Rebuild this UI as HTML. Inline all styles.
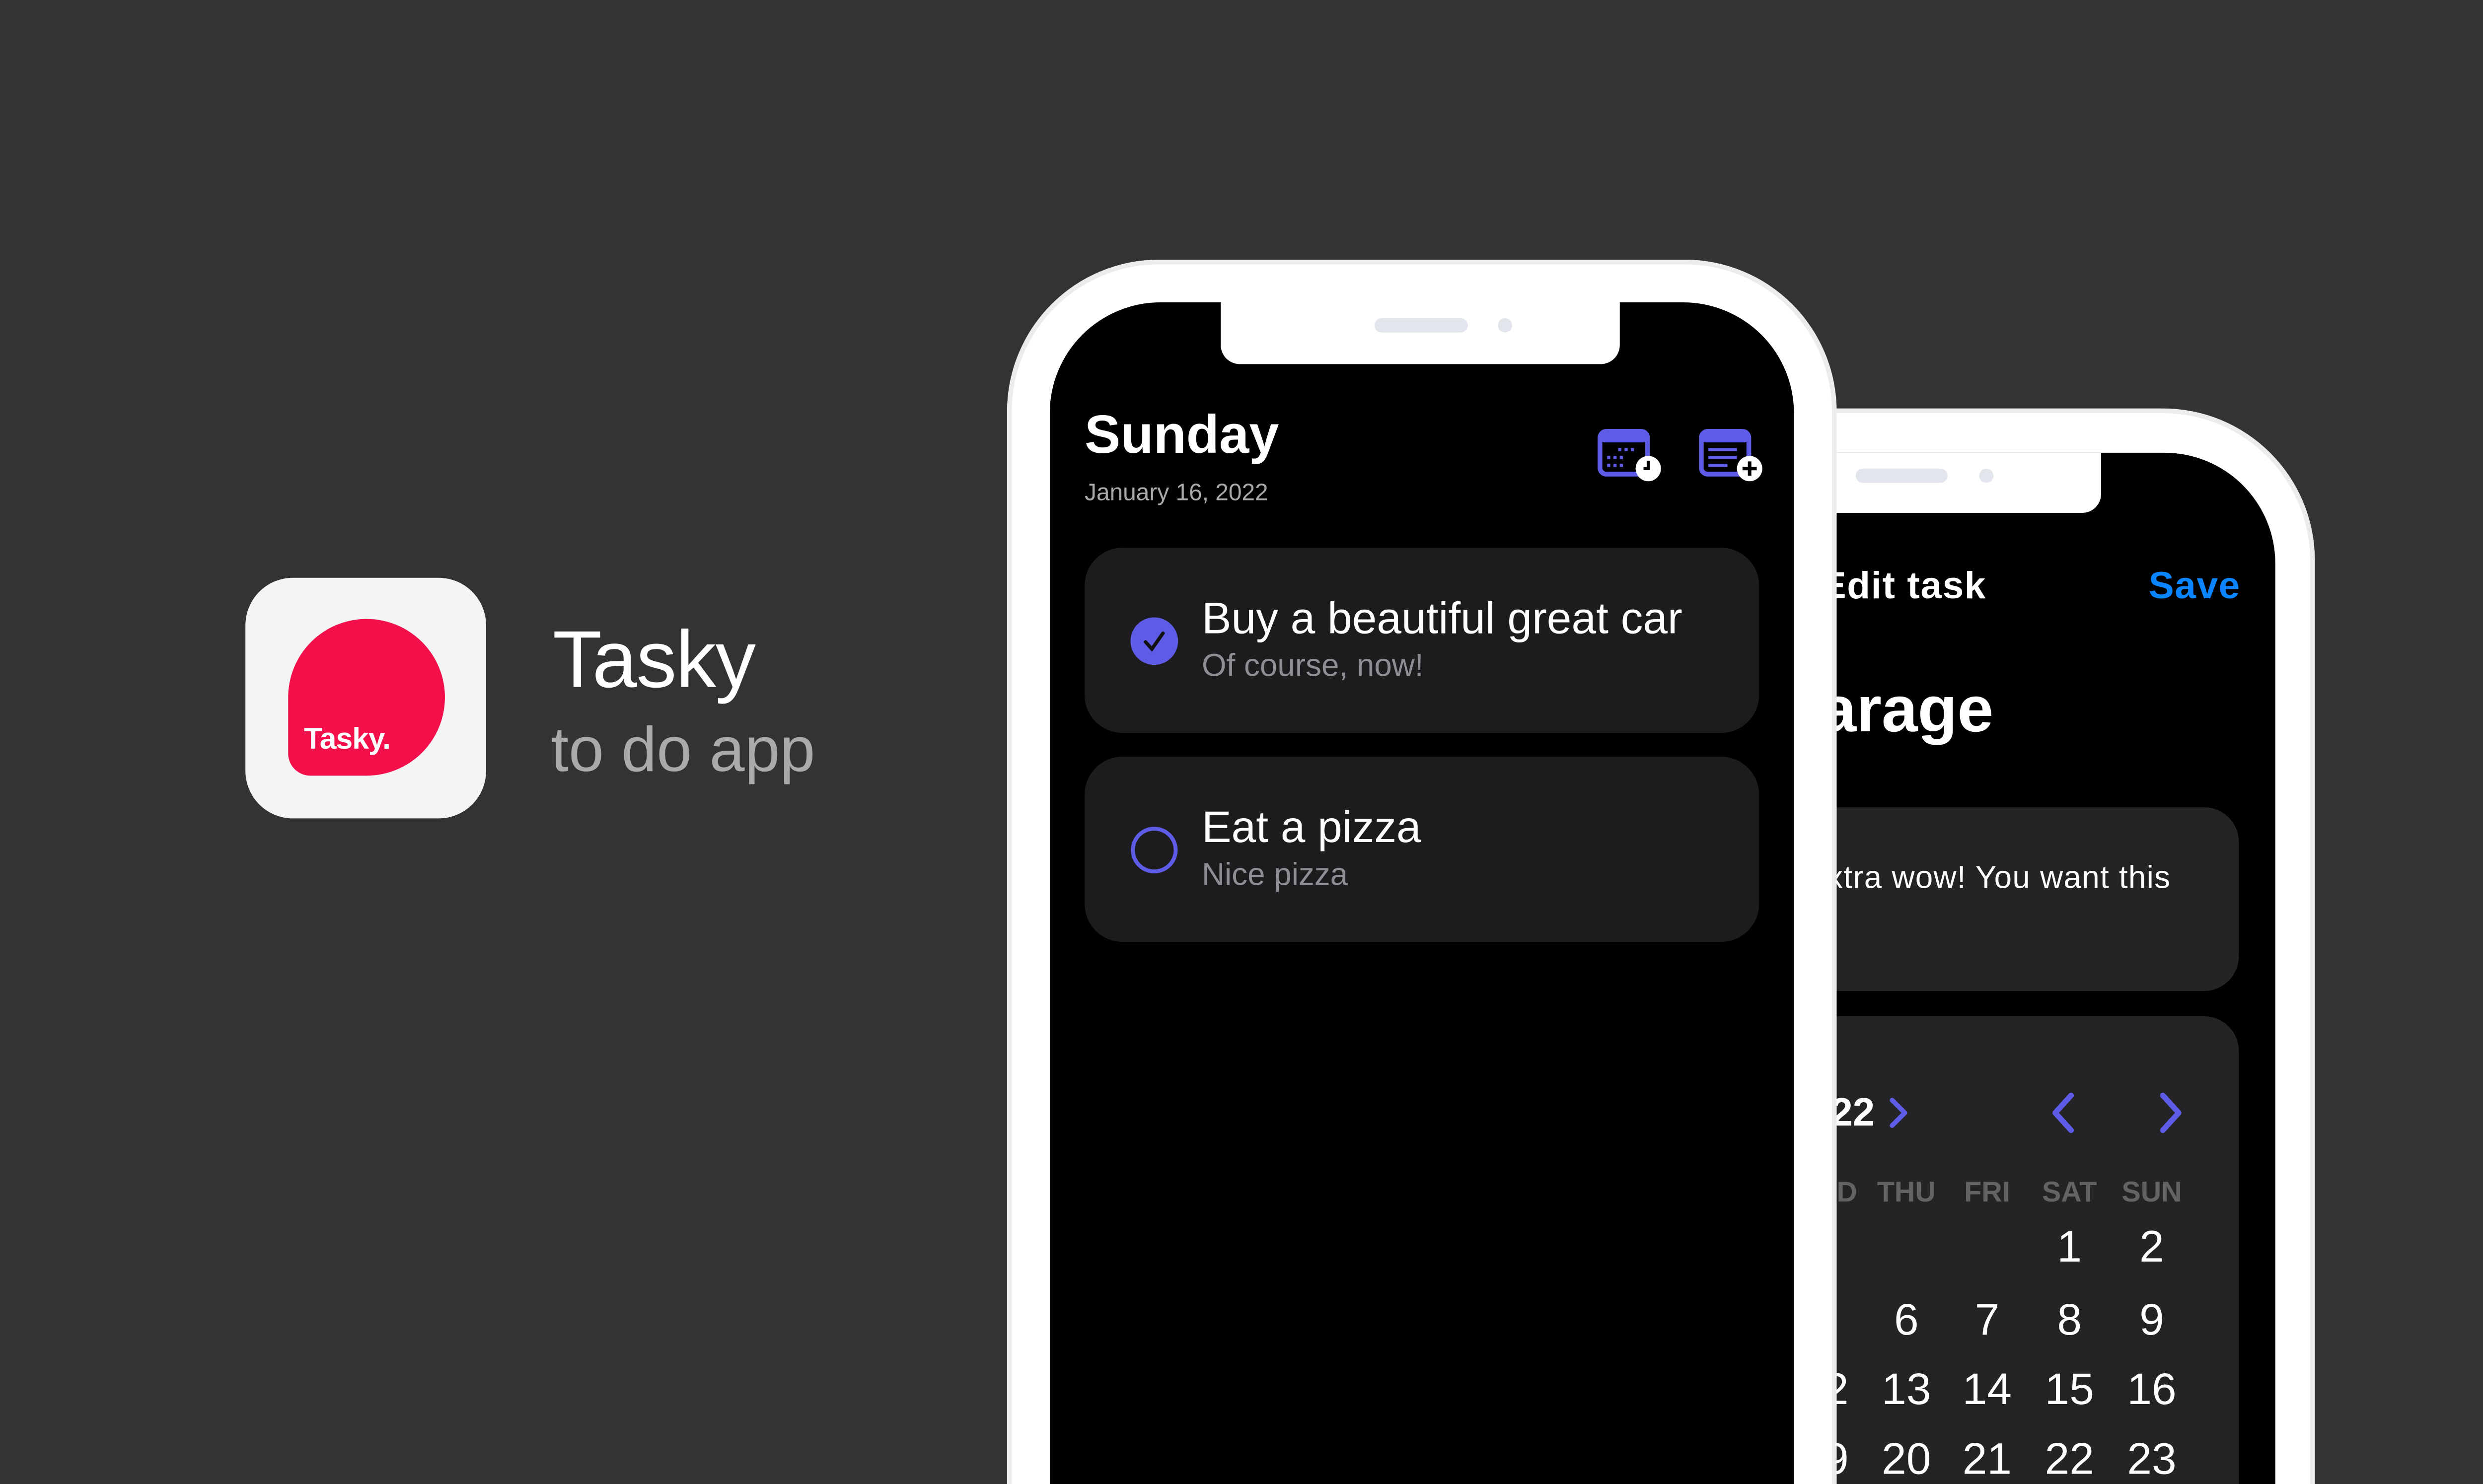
<!DOCTYPE html>
<html><head><meta charset="utf-8"><style>
html,body{margin:0;padding:0;background:#333333;overflow:hidden;width:100%;height:100%}
svg.root{position:fixed;left:0;top:0;width:100vw;height:66vw;display:block}
#w{position:relative;width:1568px;height:1035px;font-family:"Liberation Sans",sans-serif;overflow:hidden;background:#333333}
.a{position:absolute}
.t{position:absolute;white-space:nowrap;line-height:1}
.r span{position:absolute;width:50px;text-align:center}
</style></head><body>
<svg class="root" viewBox="0 0 1568 1035" preserveAspectRatio="xMinYMin meet" xmlns="http://www.w3.org/2000/svg">
<foreignObject x="0" y="0" width="1568" height="1035">
<div xmlns="http://www.w3.org/1999/xhtml" id="w">
<!-- app icon -->
<div class="a" style="left:155px;top:365px;width:152px;height:152px;border-radius:30px;background:#f4f4f4"></div>
<div class="a" style="left:182px;top:391px;width:99px;height:99px;border-radius:50% 50% 50% 14px;background:#f20f4a"></div>
<div class="t" style="left:192px;top:458px;font-size:19px;font-weight:bold;color:#fff;letter-spacing:-0.3px">Tasky.</div>
<div class="t" style="left:349px;top:391px;font-size:51px;color:#fff;letter-spacing:-0.5px">Tasky</div>
<div class="t" style="left:348px;top:454px;font-size:40px;color:#aaa">to do app</div>

<!-- phone 2 -->
<div class="a" style="left:938px;top:258px;width:524px;height:800px;border-radius:96px 96px 0 0;background:#fff;border:3px solid #ececec;border-bottom:0;box-sizing:border-box"></div>
<div class="a" style="left:967px;top:286px;width:470px;height:780px;border-radius:70px 70px 0 0;background:#000;overflow:hidden">
  <div class="a" style="left:108px;top:-2px;width:252px;height:40px;background:#fff;border-radius:0 0 12px 12px"></div>
  <div class="a" style="left:205px;top:10px;width:58px;height:9px;border-radius:5px;background:#e2e6ec"></div>
  <div class="a" style="left:283px;top:10px;width:9px;height:9px;border-radius:50%;background:#e2e6ec"></div>
  <div class="t" style="left:183px;top:73px;font-size:24px;color:#fff;font-weight:bold;letter-spacing:0.5px">Edit task</div>
  <div class="t" style="left:390px;top:73px;font-size:24px;color:#0a84ff;font-weight:bold;letter-spacing:0.5px">Save</div>
  <div class="t" style="right:178px;top:142px;font-size:41px;color:#fff;font-weight:bold">Garage</div>
  <div class="a" style="left:0;top:224px;width:447px;height:116px;border-radius:22px;background:#242426"></div>
  <div class="t" style="right:66px;top:259px;font-size:20px;color:#fff;letter-spacing:0.4px">Extra wow! You want this</div>
  <div class="a" style="left:0;top:356px;width:447px;height:440px;border-radius:22px 22px 0 0;background:#242426"></div>
  <div class="t" style="right:253px;top:405px;font-size:25px;color:#fff;font-weight:bold">2022</div>
  <svg class="a" style="left:224px;top:406px" width="16" height="22" viewBox="0 0 16 22"><path d="M4 3 L12 11 L4 19" stroke="#5e5ce6" stroke-width="3" fill="none" stroke-linecap="round" stroke-linejoin="round"/></svg>
  <svg class="a" style="left:326px;top:403px" width="20" height="28" viewBox="0 0 20 28"><path d="M15 3 L5 14 L15 25" stroke="#5e5ce6" stroke-width="3.5" fill="none" stroke-linecap="round" stroke-linejoin="round"/></svg>
  <svg class="a" style="left:394px;top:403px" width="20" height="28" viewBox="0 0 20 28"><path d="M5 3 L15 14 L5 25" stroke="#5e5ce6" stroke-width="3.5" fill="none" stroke-linecap="round" stroke-linejoin="round"/></svg>
  <div class="t r" style="left:160px;top:458px;font-size:18px;color:#636366;font-weight:bold;width:280px">
    <span style="left:0">WED</span><span style="left:52px">THU</span><span style="left:103px">FRI</span><span style="left:155px">SAT</span><span style="left:207px">SUN</span></div>
  <div class="t r" style="left:160px;top:488px;font-size:28px;color:#fff;width:280px"><span style="left:155px">1</span><span style="left:207px">2</span></div>
  <div class="t r" style="left:160px;top:534px;font-size:28px;color:#fff;width:280px"><span style="left:0">5</span><span style="left:52px">6</span><span style="left:103px">7</span><span style="left:155px">8</span><span style="left:207px">9</span></div>
  <div class="t r" style="left:160px;top:578px;font-size:28px;color:#fff;width:280px"><span style="left:0">12</span><span style="left:52px">13</span><span style="left:103px">14</span><span style="left:155px">15</span><span style="left:207px">16</span></div>
  <div class="t r" style="left:160px;top:622px;font-size:28px;color:#fff;width:280px"><span style="left:0">19</span><span style="left:52px">20</span><span style="left:103px">21</span><span style="left:155px">22</span><span style="left:207px">23</span></div>
</div>

<!-- phone 1 -->
<div class="a" style="left:636px;top:164px;width:524px;height:900px;border-radius:96px 96px 0 0;background:#fff;border:3px solid #ececec;border-bottom:0;box-sizing:border-box"></div>
<div class="a" style="left:663px;top:191px;width:470px;height:880px;border-radius:70px 70px 0 0;background:#000;overflow:hidden">
  <div class="a" style="left:108px;top:-2px;width:252px;height:41px;background:#fff;border-radius:0 0 12px 12px"></div>
  <div class="a" style="left:205px;top:10px;width:59px;height:9px;border-radius:5px;background:#e2e6ec"></div>
  <div class="a" style="left:283px;top:10px;width:9px;height:9px;border-radius:50%;background:#e2e6ec"></div>
  <div class="t" style="left:22px;top:67px;font-size:34px;color:#fff;font-weight:bold">Sunday</div>
  <div class="t" style="left:22px;top:113px;font-size:15px;color:#aaa">January 16, 2022</div>
  <svg class="a" style="left:346px;top:80px" width="42" height="36" viewBox="0 0 42 36">
    <rect x="1.5" y="1.5" width="30" height="27" rx="4" fill="#000" stroke="#5e5ce6" stroke-width="3"/>
    <rect x="1.5" y="1.5" width="30" height="7" rx="3" fill="#5e5ce6"/>
    <g fill="#5e5ce6"><rect x="13" y="12" width="2" height="2"/><rect x="17" y="12" width="2" height="2"/><rect x="21" y="12" width="2" height="2"/><rect x="6" y="17" width="2" height="2"/><rect x="10" y="17" width="2" height="2"/><rect x="14" y="17" width="2" height="2"/><rect x="6" y="22" width="2" height="2"/><rect x="10" y="22" width="2" height="2"/><rect x="14" y="22" width="2" height="2"/></g>
    <circle cx="32" cy="25" r="8" fill="#fff"/><path d="M32 20 V25 H29" stroke="#000" stroke-width="2" fill="none"/>
  </svg>
  <svg class="a" style="left:410px;top:80px" width="42" height="36" viewBox="0 0 42 36">
    <rect x="1.5" y="1.5" width="30" height="27" rx="4" fill="#000" stroke="#5e5ce6" stroke-width="3"/>
    <rect x="1.5" y="1.5" width="30" height="7" rx="3" fill="#5e5ce6"/>
    <g stroke="#5e5ce6" stroke-width="2"><path d="M6 13 H24 M6 18 H24 M6 23 H18"/></g>
    <circle cx="32" cy="25" r="8" fill="#fff"/><path d="M32 20.5 V29.5 M27.5 25 H36.5" stroke="#000" stroke-width="2.2"/>
  </svg>
  <div class="a" style="left:22px;top:155px;width:426px;height:117px;border-radius:24px;background:#1c1c1e"></div>
  <svg class="a" style="left:50px;top:198px" width="32" height="32" viewBox="0 0 32 32"><circle cx="16" cy="16" r="15" fill="#5e5ce6"/><path d="M10.5 16.5 L14.5 21 L21.5 11" stroke="#111" stroke-width="2.2" fill="none" stroke-linecap="round"/></svg>
  <div class="t" style="left:96px;top:186px;font-size:28px;color:#fff">Buy a beautiful great car</div>
  <div class="t" style="left:96px;top:220px;font-size:20px;color:#8e8e93">Of course, now!</div>
  <div class="a" style="left:22px;top:287px;width:426px;height:117px;border-radius:24px;background:#1c1c1e"></div>
  <svg class="a" style="left:50px;top:330px" width="32" height="32" viewBox="0 0 32 32"><circle cx="16" cy="16" r="13.5" fill="none" stroke="#5e5ce6" stroke-width="2.5"/></svg>
  <div class="t" style="left:96px;top:318px;font-size:28px;color:#fff">Eat a pizza</div>
  <div class="t" style="left:96px;top:352px;font-size:20px;color:#8e8e93">Nice pizza</div>
</div>
</div>
</foreignObject>
</svg>
</body></html>
